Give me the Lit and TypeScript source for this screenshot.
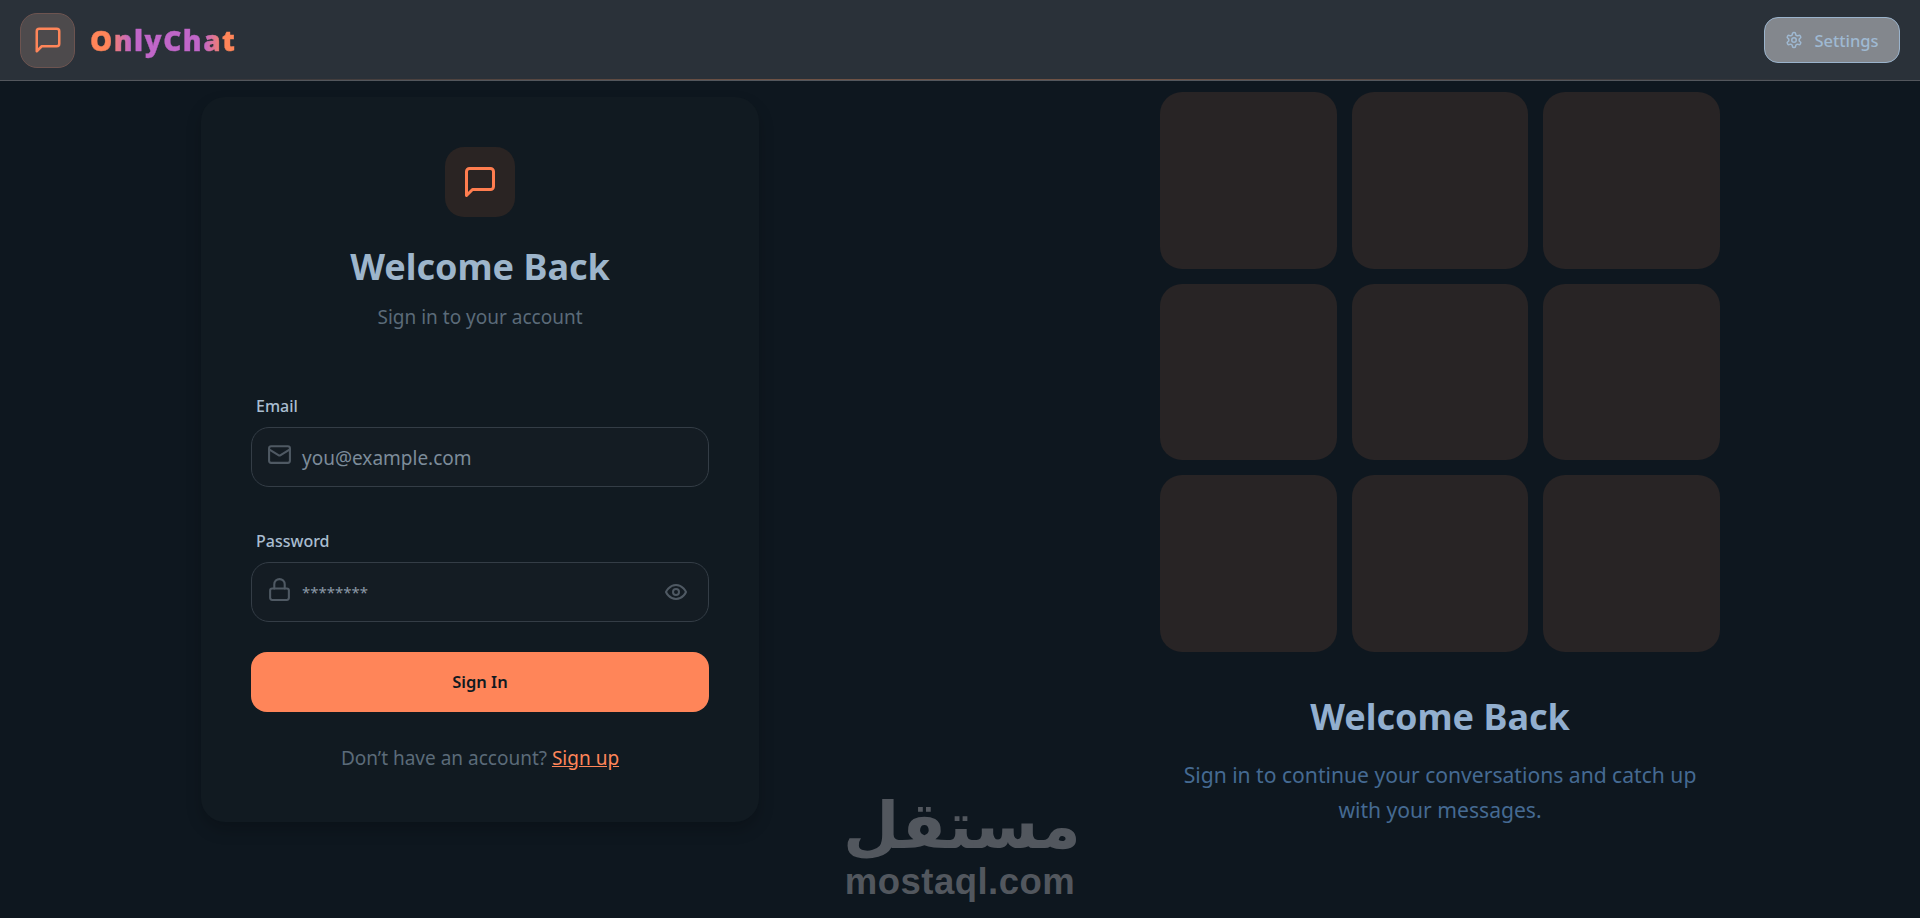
import { LitElement, html, css, svg } from "lit";
import { customElement } from "lit/decorators.js";

const chat = svg`<path d="M21 15a2 2 0 0 1-2 2H7l-4 4V5a2 2 0 0 1 2-2h14a2 2 0 0 1 2 2z"/>`;
const gear = svg`<path d="M12.22 2h-.44a2 2 0 0 0-2 2v.18a2 2 0 0 1-1 1.73l-.43.25a2 2 0 0 1-2 0l-.15-.08a2 2 0 0 0-2.73.73l-.22.38a2 2 0 0 0 .73 2.73l.15.1a2 2 0 0 1 1 1.72v.51a2 2 0 0 1-1 1.74l-.15.09a2 2 0 0 0-.73 2.73l.22.38a2 2 0 0 0 2.73.73l.15-.08a2 2 0 0 1 2 0l.43.25a2 2 0 0 1 1 1.73V20a2 2 0 0 0 2 2h.44a2 2 0 0 0 2-2v-.18a2 2 0 0 1 1-1.73l.43-.25a2 2 0 0 1 2 0l.15.08a2 2 0 0 0 2.73-.73l.22-.39a2 2 0 0 0-.73-2.73l-.15-.08a2 2 0 0 1-1-1.74v-.5a2 2 0 0 1 1-1.74l.15-.09a2 2 0 0 0 .73-2.73l-.22-.38a2 2 0 0 0-2.73-.73l-.15.08a2 2 0 0 1-2 0l-.43-.25a2 2 0 0 1-1-1.73V4a2 2 0 0 0-2-2z"/><circle cx="12" cy="12" r="3"/>`;
const mail = svg`<rect x="2" y="4" width="20" height="16" rx="2"/><path d="m22 7-8.97 5.7a1.94 1.94 0 0 1-2.06 0L2 7"/>`;
const lock = svg`<rect x="3" y="11" width="18" height="11" rx="2" ry="2"/><path d="M7 11V7a5 5 0 0 1 10 0v4"/>`;
const eye = svg`<path d="M2 12s3-7 10-7 10 7 10 7-3 7-10 7-10-7-10-7z"/><circle cx="12" cy="12" r="3"/>`;

const icon = (body: unknown, cls: string) =>
  html`<svg class="ico ${cls}" viewBox="0 0 24 24" fill="none" stroke="currentColor" stroke-width="2" stroke-linecap="round" stroke-linejoin="round">${body}</svg>`;

@customElement("app-root")
export class AppRoot extends LitElement {
  static styles = css`
    :host { display: block; position: relative; height: 918px; overflow: hidden; background: #0e171f; font-family: "Noto Sans", "Open Sans", sans-serif; }
    * { box-sizing: border-box; }
    .ico { display: block; flex: none; }
    header { height: 81px; display: flex; align-items: center; justify-content: space-between; padding: 0 20px; background: #2a3139; border-bottom: 1px solid #53575d; position: relative; }
    header::after { content: ""; position: absolute; left: 0; right: 0; bottom: 0; height: 1px; background: linear-gradient(90deg, transparent 5%, #6e5245 40%, #6e5245 60%, transparent 95%); }
    .brand { display: flex; align-items: center; gap: 15px; }
    .logo { width: 55px; height: 55px; border-radius: 17px; background: #4d4a4c; border: 1px solid #6d5450; display: flex; align-items: center; justify-content: center; color: #ff8559; }
    .s30 { width: 30px; height: 30px; }
    .name { font-family: "Noto Sans", sans-serif; font-size: 28px; font-weight: 900; letter-spacing: 1.5px; -webkit-text-stroke: .4px transparent; background: linear-gradient(90deg, #ff8559 0%, #ff8559 12%, #c066c8 28%, #c066c8 78%, #ff8559 92%); -webkit-background-clip: text; background-clip: text; color: transparent; }
    .settings { width: 136px; height: 46px; border-radius: 14px; background: #83878d; border: 1px solid #9ab3cc; display: flex; align-items: center; justify-content: center; gap: 11px; color: #9fb9d2; font: 500 16.5px "Noto Sans", sans-serif; padding: 0; }
    .s18 { width: 18px; height: 18px; }
    main { display: grid; grid-template-columns: 1fr 1fr; height: 837px; padding-bottom: 81px; align-items: center; justify-items: center; }
    .card { width: 558px; height: 725px; border-radius: 24px; background: #111a21; box-shadow: 0 8px 16px rgba(0,0,0,.2); padding: 50px 50px; display: flex; flex-direction: column; }
    .badge { width: 70px; height: 70px; border-radius: 19px; background: #2a2423; align-self: center; display: flex; align-items: center; justify-content: center; color: #ff7d4f; }
    .s36 { width: 36px; height: 36px; }
    h1 { margin: 0; font-size: 36px; line-height: 49px; font-weight: 700; color: #9db5cb; text-align: center; }
    .card h1 { margin-top: 25px; }
    .sub { margin: 13px 0 0; font-size: 19px; line-height: 26px; color: #5b6b79; text-align: center; }
    .field { display: flex; flex-direction: column; gap: 10px; }
    .f1 { margin-top: 65px; }
    .f2 { margin-top: 43px; }
    label { padding-left: 5px; font-size: 16px; line-height: 22px; font-weight: 500; color: #a9bdd0; }
    .input { height: 60px; border-radius: 18px; border: 1px solid #343d46; background: #141c23; display: flex; align-items: center; padding: 0 20px 0 15px; color: #4f5963; }
    .s25 { width: 25px; height: 25px; }
    .s24 { width: 24px; height: 24px; }
    .up5 { margin-top: -5px; }
    .up4 { margin-top: -4px; }
    .input span { margin-left: 10px; flex: 1; font-size: 19px; padding-top: 3px; color: #7d8c9a; }
    .input .stars { font-size: 15px; padding-top: 0; color: #8a97a5; }
    .btn { margin-top: 30px; height: 60px; border: 0; border-radius: 16px; background: #ff8559; color: #111a21; font: 600 16.5px "Noto Sans", sans-serif; }
    .foot { margin: 32px 0 0; text-align: center; font-size: 19px; line-height: 28px; color: #5b6b79; }
    .foot a { color: #ff8559; text-decoration: underline; }
    .side { width: 560px; align-self: start; padding-top: 11px; display: flex; flex-direction: column; align-items: center; }
    .grid { width: 560px; display: grid; grid-template-columns: repeat(3, 1fr); gap: 15px; }
    .grid div { aspect-ratio: 1; border-radius: 22px; background: #282425; }
    .side h1 { color: #92afcf; margin-top: 40px; }
    .side p { margin: 16px 0 0; width: 540px; font-size: 21.1px; line-height: 35px; color: #456a92; text-align: center; }
    .mark { position: absolute; left: 843px; top: 790px; width: 234px; text-align: center; color: #52575e; font-weight: 700; pointer-events: none; }
    .ar { font-family: "DejaVu Sans", sans-serif; font-size: 65px; line-height: 72px; padding-right: 4px; }
    .lat { font-family: "Liberation Sans", sans-serif; font-size: 36.5px; line-height: 40px; letter-spacing: .5px; }
  `;

  render() {
    return html`
      <header>
        <div class="brand">
          <div class="logo">${icon(chat, "s30")}</div>
          <div class="name">OnlyChat</div>
        </div>
        <button class="settings">${icon(gear, "s18")}Settings</button>
      </header>
      <main>
        <section class="card">
          <div class="badge">${icon(chat, "s36")}</div>
          <h1>Welcome Back</h1>
          <p class="sub">Sign in to your account</p>
          <div class="field f1">
            <label>Email</label>
            <div class="input">${icon(mail, "s25 up5")}<span>you@example.com</span></div>
          </div>
          <div class="field f2">
            <label>Password</label>
            <div class="input">${icon(lock, "s25 up4")}<span class="stars">********</span>${icon(eye, "s24")}</div>
          </div>
          <button class="btn">Sign In</button>
          <p class="foot">Don’t have an account? <a>Sign up</a></p>
        </section>
        <section class="side">
          <div class="grid">${Array.from({ length: 9 }, () => html`<div></div>`)}</div>
          <h1>Welcome Back</h1>
          <p>Sign in to continue your conversations and catch up with your messages.</p>
        </section>
      </main>
      <div class="mark"><div class="ar">مستقل</div><div class="lat">mostaql.com</div></div>
    `;
  }
}
